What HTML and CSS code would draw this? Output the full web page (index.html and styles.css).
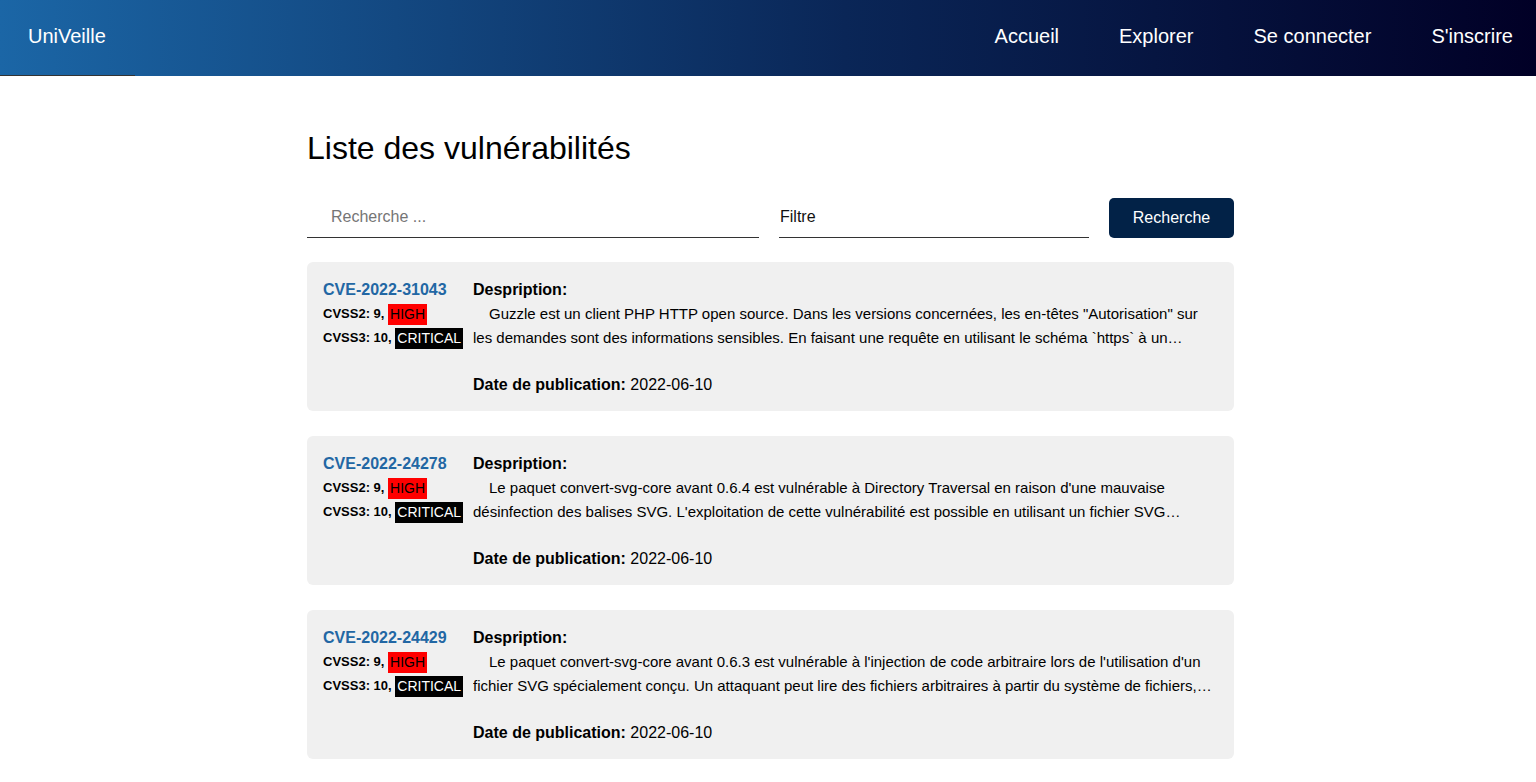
FILE: index.html
```html
<!DOCTYPE html>
<html lang="fr">
<head>
<meta charset="utf-8">
<title>UniVeille</title>
<link rel="stylesheet" href="styles.css">
</head>
<body>
<header class="topbar">
  <a class="brand" href="#">UniVeille</a>
  <nav class="nav">
    <a href="#">Accueil</a>
    <a href="#">Explorer</a>
    <a href="#">Se connecter</a>
    <a href="#">S'inscrire</a>
  </nav>
</header>
<main class="container">
  <h1 class="title">Liste des vulnérabilités</h1>
  <form class="search">
    <input class="field field-search" type="text" placeholder="Recherche ...">
    <input class="field field-filter" type="text" placeholder="Filtre">
    <button class="btn" type="button">Recherche</button>
  </form>

  <article class="card">
    <div class="meta">
      <a class="cve" href="#">CVE-2022-31043</a>
      <div class="score">CVSS2: 9, <span class="badge high">HIGH</span></div>
      <div class="score">CVSS3: 10, <span class="badge critical">CRITICAL</span></div>
    </div>
    <div class="body">
      <div class="label">Despription:</div>
      <p class="desc">Guzzle est un client PHP HTTP open source. Dans les versions concernées, les en-têtes "Autorisation" sur les demandes sont des informations sensibles. En faisant une requête en utilisant le schéma `https` à un serveur qui redirige vers une URI avec le schéma `http`, les en-têtes sont transmis.</p>
      <div class="date"><b>Date de publication:</b> 2022-06-10</div>
    </div>
  </article>

  <article class="card">
    <div class="meta">
      <a class="cve" href="#">CVE-2022-24278</a>
      <div class="score">CVSS2: 9, <span class="badge high">HIGH</span></div>
      <div class="score">CVSS3: 10, <span class="badge critical">CRITICAL</span></div>
    </div>
    <div class="body">
      <div class="label">Despription:</div>
      <p class="desc">Le paquet convert-svg-core avant 0.6.4 est vulnérable à Directory Traversal en raison d'une mauvaise désinfection des balises SVG. L'exploitation de cette vulnérabilité est possible en utilisant un fichier SVG spécialement conçu.</p>
      <div class="date"><b>Date de publication:</b> 2022-06-10</div>
    </div>
  </article>

  <article class="card">
    <div class="meta">
      <a class="cve" href="#">CVE-2022-24429</a>
      <div class="score">CVSS2: 9, <span class="badge high">HIGH</span></div>
      <div class="score">CVSS3: 10, <span class="badge critical">CRITICAL</span></div>
    </div>
    <div class="body">
      <div class="label">Despription:</div>
      <p class="desc">Le paquet convert-svg-core avant 0.6.3 est vulnérable à l'injection de code arbitraire lors de l'utilisation d'un fichier SVG spécialement conçu. Un attaquant peut lire des fichiers arbitraires à partir du système de fichiers, puis afficher le contenu.</p>
      <div class="date"><b>Date de publication:</b> 2022-06-10</div>
    </div>
  </article>
</main>
</body>
</html>
```

FILE: styles.css
```css
* { box-sizing: border-box; }

body {
  margin: 0;
  font-family: "Liberation Sans", Arial, sans-serif;
  color: #000;
  background: #fff;
}

.topbar {
  height: 76px;
  padding-bottom: 4px;
  display: flex;
  align-items: center;
  justify-content: space-between;
  background: linear-gradient(to right, #1b66a6 0%, #0a2657 55%, #010026 100%);
  position: relative;
}

.topbar::after {
  content: "";
  position: absolute;
  left: 0;
  bottom: 0;
  width: 135px;
  height: 1px;
  background: #333;
}

.brand {
  color: #fff;
  text-decoration: none;
  font-size: 20px;
  padding-left: 28px;
}

.nav {
  display: flex;
  gap: 60px;
  padding-right: 23px;
}

.nav a {
  color: #fff;
  text-decoration: none;
  font-size: 20px;
}

.container {
  width: 932px;
  margin: 0 auto;
  padding: 0 0 0 5px;
}

.title {
  font-weight: normal;
  font-size: 32px;
  margin: 54px 0 31px;
  line-height: 37px;
}

.search {
  display: flex;
  align-items: flex-end;
  margin-bottom: 24px;
}

.field {
  height: 40px;
  border: none;
  border-bottom: 1px solid #333;
  background: transparent;
  font-family: "Liberation Sans", Arial, sans-serif;
  font-size: 16px;
  outline: none;
}

.field-search {
  width: 452px;
  padding: 0 0 2px 24px;
}

.field-search::placeholder { color: #757575; }

.field-filter {
  width: 310px;
  margin-left: 20px;
  padding: 0 0 2px 1px;
}

.field-filter::placeholder { color: #111; }

.btn {
  margin-left: 20px;
  width: 125px;
  height: 40px;
  border: none;
  border-radius: 5px;
  background: #022247;
  color: #fff;
  font-family: "Liberation Sans", Arial, sans-serif;
  font-size: 16px;
}

.card {
  display: flex;
  background: #f0f0f0;
  border-radius: 6px;
  padding: 16px 16px 14px;
  margin-bottom: 25px;
}

.meta {
  width: 150px;
  flex-shrink: 0;
}

.cve {
  display: block;
  color: #2267a4;
  text-decoration: none;
  font-weight: bold;
  font-size: 16px;
  line-height: 24px;
}

.score {
  font-weight: bold;
  font-size: 13px;
  line-height: 24px;
}

.badge {
  display: inline-block;
  font-weight: normal;
  font-size: 14px;
  line-height: 21px;
  padding: 0 2px;
  vertical-align: middle;
}

.high { background: #ff0000; color: #000; }
.critical { background: #000; color: #fff; }

.body { flex: 1; }

.label {
  font-weight: bold;
  font-size: 16px;
  line-height: 24px;
}

.desc {
  margin: 0;
  font-size: 15px;
  line-height: 24px;
  text-indent: 16px;
  display: -webkit-box;
  -webkit-line-clamp: 2;
  -webkit-box-orient: vertical;
  overflow: hidden;
}

.date {
  margin-top: 23px;
  font-size: 16px;
  line-height: 24px;
}
```
